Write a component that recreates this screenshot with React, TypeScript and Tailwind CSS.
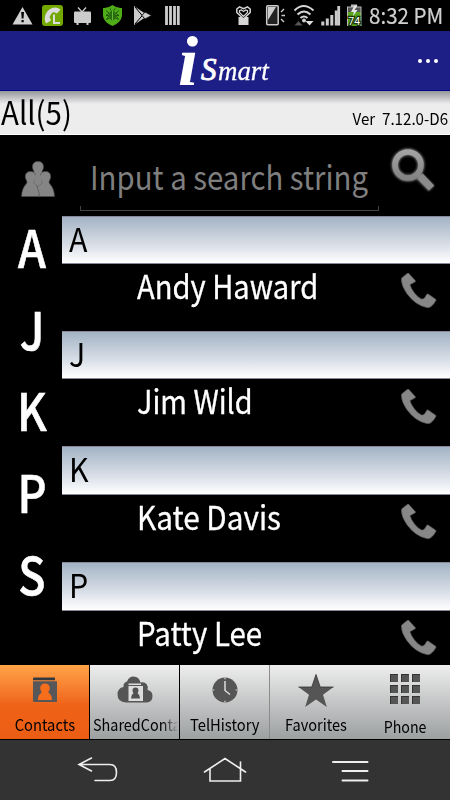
import React from "react";

const sans = "font-['Noto_Sans_CJK_JP','Noto_Sans',sans-serif]";

function StatusIcons() {
  return (
    <svg width="366" height="31" viewBox="0 0 366 31" className="block shrink-0">
      <path d="M22.5 7 32.5 24.5H12.5Z" fill="#d0d0d0" />
      <path d="M21.2 12h2.8l-.5 6.5h-1.8zM21.5 20h2.2v2.2h-2.2z" fill="#000" />
      <rect x="42" y="5" width="21" height="21" rx="3" fill="#73a800" />
      <path d="M46 23.5Q43.500 18.500 46 13.500 49 8 55 7.500q3 0 5.500 2l-3.500 4-3.500-1.500Q50 14 49.500 17l1.500 3.500Z" fill="#dcdcdc" />
      <path d="M54 14.500V23H60" fill="none" stroke="#dcdcdc" strokeWidth="2" />
      <path d="M78 7.500 82 12 86 7.500" fill="none" stroke="#ccc" strokeWidth="1.300" />
      <rect x="74" y="11.500" width="17" height="11.500" rx="1" fill="#ccc" />
      <path d="M77.500 22v3M87.500 22v3" stroke="#ccc" strokeWidth="2" />
      <path d="M112.500 5Q117 8.500 122 8v8Q121 22.500 112.500 26 104 22.500 103 16V8q5 .5 9.500-3Z" fill="#4fad18" />
      <g stroke="#1c4f10" strokeWidth=".9" fill="none">
        <path d="M106 10.500 109 13l-3 2.500h3l-2.500 4 4-2M119 10.500 116 13l3 2.500h-3l2.500 4-4-2M110 8.500l1 2M115 8.500l-1 2" />
      </g>
      <ellipse cx="112.500" cy="15.500" rx="3.500" ry="4.800" fill="#286c12" />
      <path d="M112.500 11v9" stroke="#67b836" />
      <path d="M134 6 148 15.500 134 25Z" fill="#ccc" />
      <path d="m135 7 11 13M135 24l12-14" stroke="#000" strokeWidth="1" />
      <path d="m145 12 6.500 3.500L145 19l-3-3.500z" fill="#ccc" stroke="#000" strokeWidth=".7" />
      <path d="M166.500 6v19M170.500 6v19M174.500 6v19M178.300 6v19" stroke="#ccc" strokeWidth="2.800" />
      <rect x="238.500" y="17" width="10" height="8" fill="#d5d5d5" />
      <path d="M243.500 19 236.800 12.500V9l2.700-2.200 4 1.900 4-1.900L250.200 9v3.500Z" fill="#000" stroke="#d5d5d5" strokeWidth="1.500" />
      <path d="M243.500 16.500 239.500 12.500v-1.800l2-.8 2 1.500 2-1.500 2 .8v1.800Z" fill="none" stroke="#d5d5d5" strokeWidth="1.200" />
      <rect x="266.700" y="5.700" width="11.500" height="19" rx="1" fill="#222" stroke="#ccc" strokeWidth="1.500" />
      <path d="M268 20V7h8z" fill="#ccc" />
      <path d="m281 12 3-3M281.500 15.500h3.500M281 19l3 3" stroke="#ccc" strokeWidth="1.400" />
      <g fill="none" stroke="#d5d5d5" strokeWidth="2">
        <path d="M294.500 10.500q9-9 19 0M297.500 14.500q6.500-6 13 0M300.500 18q3.500-3 7 0" />
      </g>
      <circle cx="304" cy="20.500" r="2" fill="#ccc" />
      <path d="m294.500 25.500 4-4.500 4 4.500z" fill="#555" />
      <path d="m305.500 21 4 4.500 4-4.500z" fill="#ddd" />
      <path d="M322.800 21.500V25.500M327.300 18.500v7M331.800 15v10.500M336.300 10.500v15" stroke="#ccc" strokeWidth="3" />
      <path d="M338.700 6v19.500" stroke="#ccc" strokeWidth="2.800" />
      <rect x="347" y="6.500" width="14.500" height="19.500" fill="#bbb" />
      <rect x="351" y="4.500" width="6" height="3" fill="#bbb" />
      <rect x="348" y="11.500" width="12.500" height="14.500" fill="#59a51b" />
      <rect x="348" y="7.500" width="12.500" height="4.500" fill="#555" />
      <path d="m354.500 5.500-3.500 6.500h3l-1.500 5 5-7h-3l3-4.500z" fill="#e8e8e8" />
      <text x="354.200" y="25.300" textAnchor="middle" fill="#fff" stroke="#163607" strokeWidth="2.500" paintOrder="stroke" fontSize="10.500" fontFamily="Roboto, sans-serif">74</text>
    </svg>
  );
}

function PeopleIcon() {
  return (
    <svg width="34" height="36" viewBox="0 0 34 36" className="block" fill="#858585" stroke="#4b4b4b" strokeWidth=".6">
      <path d="M17 .5c3.500 0 5.500 2 5.500 5.300 0 2-1 3.500-1.500 5 0 2 4 3 5 5l-1 11H9l-1-11c1-2 5-3 5-5-.5-1.500-1.500-3-1.500-5C11.500 2.500 13.500.5 17 .5Z" />
      <path d="M9.500 10.500c3.500 0 5.300 2 5.300 5 0 2.500-1.800 4-1.800 6 1 2 5.500 3 6 14H.5C1 25.500 5.500 23.500 6 21.500c0-2-1.700-3.500-1.700-6 0-3 2-5 5.200-5Z" />
      <path d="M24.500 10.500c3.300 0 5.200 2 5.200 5 0 2.500-1.700 4-1.700 6 .5 2 5 4 5.500 14H18.500C18 30 16 26 16 26c1-2 4.500-2.500 5-4.500 0-2-1.800-3.500-1.800-6 0-3 2-5 5.300-5Z" />
      <path d="m13 15 4-2 4 2-.5 7-3.500 3-3.500-3z" stroke="none" />
    </svg>
  );
}

function SearchIcon() {
  return (
    <svg width="52" height="52" viewBox="0 0 52 52" className="block">
      <defs>
        <filter id="glow" x="-30%" y="-30%" width="160%" height="160%">
          <feGaussianBlur stdDeviation="1.300" />
        </filter>
        <linearGradient id="lens" x1="0" y1="0" x2="0" y2="1">
          <stop stopColor="#a2a2a2" />
          <stop offset="1" stopColor="#848484" />
        </linearGradient>
      </defs>
      <g fill="none" stroke="#777" strokeWidth="7" filter="url(#glow)">
        <circle cx="20" cy="20" r="13" />
        <path d="m31 31 12.500 12.500" strokeWidth="8" />
      </g>
      <path d="m29 28 3 3" stroke="#8b8b8b" strokeWidth="4" />
      <path d="m32 31 11.500 12" stroke="#8b8b8b" strokeWidth="7.500" />
      <circle cx="20" cy="20" r="13" fill="none" stroke="url(#lens)" strokeWidth="5.500" />
    </svg>
  );
}

function Handset() {
  return (
    <svg width="36" height="36" viewBox="0 0 36 36" className="block">
      <path
        d="M7.700.3 14.200 7.500q.6.900-.3 1.500L9 11.700q1.200 4 4.500 8.300 3 4 7 6 1.500.3 3-1l2.300-3.700q.6-.6 1.400-.2L34.700 26.200q.6.500.2 1.300Q33 31.500 29.700 33.800q-1.500 1.200-4 .8Q14 32 5.800 20.500.5 13 .3 6.500.2 5.200 1.500 4.200L6.500.3q.6-.5 1.200 0Z"
        fill="#878787" stroke="#555" strokeWidth=".6"
      />
    </svg>
  );
}

function ContactsIcon() {
  return (
    <svg width="24" height="26" viewBox="0 0 24 26" className="block">
      <path d="M0 1.500Q0 .5 1 .5H22V3.300H0Z" fill="#36393d" />
      <path d="M0 4.300H24V24.500Q24 25 23 25H1Q0 25 0 24Z" fill="#57575a" />
      <path d="M12 6.500c3 0 4.800 2 4.800 4.500 0 2-1 3-1.500 4.300 1.200 1.700 3.700 2.300 3.700 7.700H5c0-5.400 2.500-6 3.700-7.700C8.200 14 7.200 13 7.200 11c0-2.500 1.800-4.500 4.800-4.500Z" fill="#f66d1b" />
    </svg>
  );
}

function CloudIcon() {
  return (
    <svg width="36" height="27" viewBox="0 0 36 27" className="block">
      <path d="M9 26.500Q.5 26 .5 18.500.500 12 6.500 11 6 6.500 10 5.500 12 .5 16.500.5 22 .5 23.500 6.500q4-1 6 1.500 2 2.500 1 6 5 1 5 6 0 6-6 6.500Z" fill="#555" />
      <path d="M11.500 7.500h12.500v1.500H11.500ZM11.500 10H26V25H11.500Z" fill="#ddd" />
      <path d="M18.500 11.500q3 0 3 3 0 1.500-1 2.800 2 1 2.500 5.200H14q.5-4.200 2.500-5.200-1-1.300-1-2.800 0-3 3-3Z" fill="#505050" />
    </svg>
  );
}

function ClockIcon() {
  return (
    <svg width="26" height="26" viewBox="0 0 26 26" className="block">
      <circle cx="13" cy="13" r="12.500" fill="#555" />
      <path d="M13 4v9.500l5 4" fill="none" stroke="#ddd" strokeWidth="1.500" />
      <path d="M13 .8v1.500M13 23.700v1.500M.8 13h1.500M23.700 13h1.500" stroke="#ddd" strokeWidth="1.200" />
    </svg>
  );
}

function StarIcon() {
  return (
    <svg width="36" height="34" viewBox="0 0 36 34" className="block">
      <path d="M18 .5 22.200 13H35.500L25 20.800 28.800 33 18 25.500 7.200 33 11 20.800.5 13H13.800Z" fill="#555" />
      <path d="M.5 13H13.800L18 .5 22.200 13H35.500" fill="none" stroke="#333" strokeWidth=".8" />
    </svg>
  );
}

function KeypadIcon() {
  return (
    <div className="grid grid-cols-3 gap-[3px]">
      {Array.from({ length: 9 }, (_, i) => (
        <div key={i} className="h-2 w-2 border-t border-l border-[#333] bg-[#555]" />
      ))}
    </div>
  );
}

const indexLetters = ["A", "J", "K", "P", "S"];

const contacts = [
  { letter: "A", name: "Andy Haward", fit: "scale-x-[0.882]", row: "h-[115px]", bar: "h-[48px]", phone: "pt-[9px]" },
  { letter: "J", name: "Jim Wild", fit: "scale-x-[0.872]", row: "h-[115px]", bar: "h-[48px]", phone: "pt-[10px]" },
  { letter: "K", name: "Kate Davis", fit: "scale-x-[0.9]", row: "h-[116px]", bar: "h-[49px]", phone: "pt-[9px]" },
  { letter: "P", name: "Patty Lee", fit: "scale-x-[0.893]", row: "h-[116px]", bar: "h-[49px]", phone: "pt-[9px]" },
];

const tabs = [
  { label: "Contacts", icon: <ContactsIcon />, tab: "w-[90px] border-r border-black bg-linear-to-b from-[#ffa347] via-[#ee6217] via-55% to-[#ec5d14]", iconBox: "pt-3", fit: "scale-x-[0.92]" },
  { label: "SharedConta", icon: <CloudIcon />, tab: "w-[90px] border-r border-black", iconBox: "pt-[11px]", fit: "" },
  { label: "TelHistory", icon: <ClockIcon />, tab: "w-[90px] border-r border-[#8b8b8b]", iconBox: "pt-3", fit: "scale-x-[0.92]" },
  { label: "Favorites", icon: <StarIcon />, tab: "w-[91px]", iconBox: "pt-[9px]", fit: "scale-x-[0.91]" },
  { label: "Phone", icon: <KeypadIcon />, tab: "w-[88px]", iconBox: "pt-[9px]", fit: "scale-x-[0.89] pt-[2px]" },
];

export default function App() {
  return (
    <div className={`flex h-[800px] w-[450px] flex-col overflow-hidden bg-black text-black ${sans}`}>
      <div className="flex h-[31px] shrink-0 bg-black">
        <StatusIcons />
        <span className="ml-[3px] w-[79px] origin-left scale-x-[0.935] text-[22px] leading-[29px] whitespace-nowrap text-[#d0d0d0] [-webkit-text-stroke:0.2px_#d0d0d0]">8:32 PM</span>
      </div>

      <header className="flex h-[60px] shrink-0 border-b border-[#00008b] bg-[#1d1f87]">
        <div className="ml-[178px] flex w-[240px] items-start font-['Liberation_Serif',serif] text-white italic">
          <span className="w-[23px] origin-left scale-x-105 text-[69px] leading-[63px] font-bold">i</span>
          <div className="flex items-baseline pt-[22px]">
            <span className="w-[17px] origin-left text-[31px] leading-[34px] [-webkit-text-stroke:0.9px_white]">S</span>
            <span className="origin-left scale-x-[0.96] text-[28px] leading-[34px] [-webkit-text-stroke:0.3px_white]">mart</span>
          </div>
        </div>
        <div className="flex gap-1 pt-[28px]">
          <i className="h-1 w-1 rounded-full bg-white" />
          <i className="h-1 w-1 rounded-full bg-white" />
          <i className="h-1 w-1 rounded-full bg-white" />
        </div>
      </header>

      <div className="flex h-11 shrink-0 justify-between border-b border-white bg-linear-to-b from-[#96979b] to-[#ededed] to-[13px]">
        <span className="ml-px origin-left scale-x-[0.92] pt-[3px] text-[32px] leading-[34px] whitespace-nowrap">All(5)</span>
        <span className="mr-[2px] origin-right scale-x-[0.945] pt-[16px] text-[16px] leading-[22px] whitespace-pre">Ver  7.12.0-D6</span>
      </div>

      <div className="flex h-[81px] shrink-0">
        <div className="ml-[21px] w-[59px] pt-[26px]"><PeopleIcon /></div>
        <div className="h-[76px] w-[299px] pt-[24px]">
          <div className="h-[47px] origin-left translate-x-[10px] scale-x-[0.89] text-[33px] leading-[34px] whitespace-nowrap text-[#7f7f7f]">Input a search string</div>
          <div className="h-[5px] border-x border-b border-[#444]" />
        </div>
        <div className="ml-[9px] pt-[10px]"><SearchIcon /></div>
      </div>

      <div className="flex h-[449px] shrink-0">
        <div className="flex w-[64px] shrink-0 flex-col text-center text-[51px] text-white">
          {indexLetters.map((letter) => (
            <div key={letter} className="h-[81.7px] shrink-0 scale-x-[0.88] leading-[60px] font-medium [-webkit-text-stroke:0.6px_white]">{letter}</div>
          ))}
        </div>
        <div className="-ml-[2px] flex w-[388px] shrink-0 flex-col">
          {contacts.map((c) => (
            <div key={c.letter} className={`shrink-0 ${c.row}`}>
              <div className={`border-y border-[#88889a] bg-linear-to-b from-[#a3b3c4] via-[#d8dee7] via-60% to-white pl-[7px] text-[33px] leading-[42px] ${c.bar}`}>
                <span className="inline-block origin-left scale-x-[0.92]">{c.letter}</span>
              </div>
              <div className="flex justify-between pr-[13px] text-white">
                <span className={`ml-[75px] origin-left pt-[4px] text-[33px] leading-[34px] whitespace-nowrap [-webkit-text-stroke:0.3px_white] ${c.fit}`}>{c.name}</span>
                <span className={c.phone}><Handset /></span>
              </div>
            </div>
          ))}
        </div>
      </div>

      <nav className="flex h-[75px] shrink-0 border-b border-black bg-linear-to-b from-[#eeeeee] to-[#9da0a1]">
        {tabs.map((t) => (
          <div key={t.label} className={`flex shrink-0 flex-col items-center ${t.tab}`}>
            <div className={`flex h-[50px] shrink-0 items-start ${t.iconBox}`}>{t.icon}</div>
            {t.label === "SharedConta" ? (
              <div className="w-[84px] mask-r-from-82% mask-r-to-102% text-[16px] leading-[18px] whitespace-nowrap">
                <span className="inline-block origin-left scale-x-[0.9]">{t.label}</span>
              </div>
            ) : (
              <div className={`text-[16px] leading-[18px] whitespace-nowrap ${t.fit}`}>{t.label}</div>
            )}
          </div>
        ))}
      </nav>

      <div className="h-[60px] shrink-0 bg-[#333]">
        <svg width="450" height="60" viewBox="0 0 450 60" className="block" fill="none" stroke="#eee" strokeWidth="1.600" strokeLinecap="round">
          <path d="M91.500 18 79 24.500 91.500 31M79 24.500h31q6.500 0 6.500 8t-6.500 8H95" />
          <path d="M204.500 32 225 18.500 245.500 32M210 29v12h30.500V22" />
          <path d="M333 22h34.500M342.500 31h25M342.500 40.500h25" strokeWidth="2" />
        </svg>
      </div>
    </div>
  );
}
